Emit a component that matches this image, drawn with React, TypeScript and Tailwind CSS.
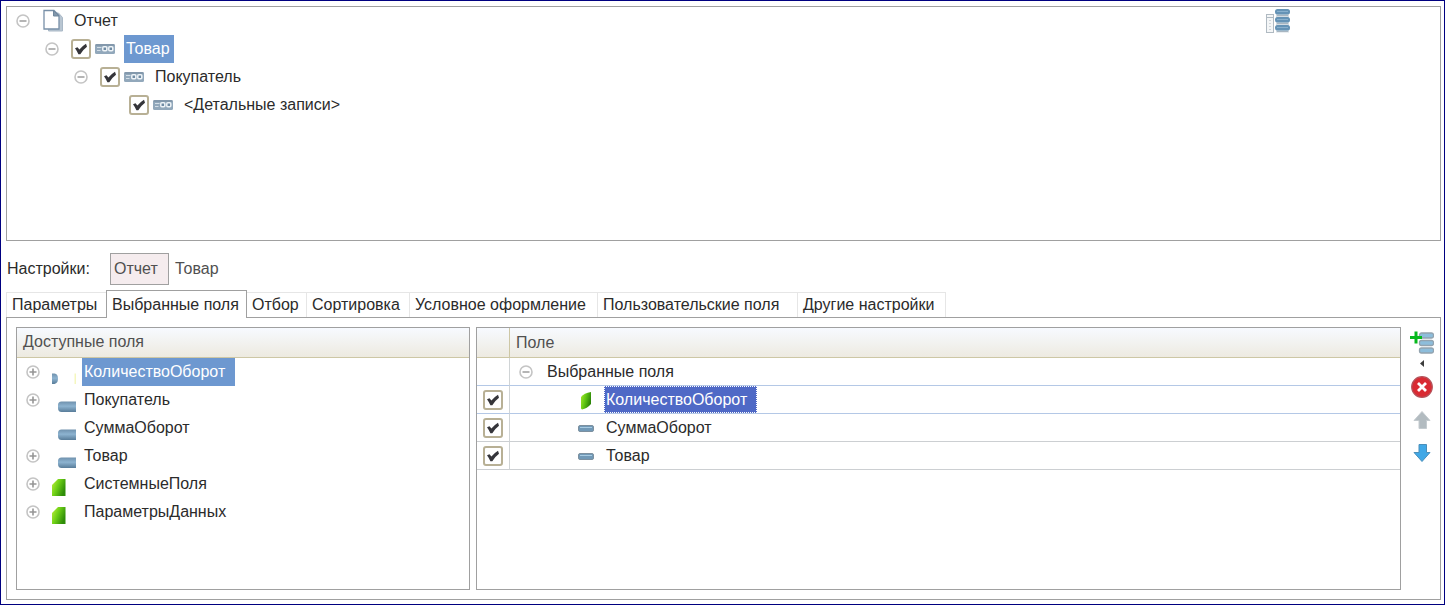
import { useState } from "react";
import type { ReactNode } from "react";

function Toggle({ open, label }: { open: boolean; label: string }) {
  return (
    <button type="button" aria-label={label} aria-expanded={open} className="h-3.5 w-3.5 shrink-0">
      <svg viewBox="0 0 14 14" className="block h-3.5 w-3.5" fill="none">
        <circle cx="7" cy="7" r="6" stroke="#c4c4c4" strokeWidth="1.6" />
        <path d={open ? "M3.5 7h7" : "M3.5 7h7M7 3.5v7"} stroke={open ? "#a3a3a3" : "#969696"} strokeWidth="1.6" />
      </svg>
    </button>
  );
}

function Tick({ label }: { label: string }) {
  const [on, setOn] = useState(true);
  return (
    <label className="grid h-5 w-5 shrink-0">
      <input
        type="checkbox"
        aria-label={label}
        checked={on}
        onChange={() => setOn(!on)}
        className="col-start-1 row-start-1 h-5 w-5 appearance-none rounded-[3px] border-2 border-[#b8b095] bg-white"
      />
      {on && (
        <svg viewBox="0 0 20 20" className="pointer-events-none col-start-1 row-start-1 h-5 w-5">
          <path d="M4 9.200 6.500 8.300 8.400 10.600Q11 7.200 15 4.800L16 7.800Q12 10.800 9.300 15.200L7.400 15.200Q6 12 4 9.200Z" fill="#35353a" />
        </svg>
      )}
    </label>
  );
}

function DocsIcon() {
  return (
    <svg viewBox="0 0 20 24" className="h-6 w-5 shrink-0">
      <path d="M5.500 4h10l4 4.500v13.500h-14z" fill="#b9c6d2" stroke="#a9b8c6" />
      <path d="M1 1.500h10l5 5v13.500H1z" fill="#fff" stroke="#7890a8" strokeWidth="1.300" />
      <path d="M10.500 1.500v5.500H16z" fill="#8297ab" stroke="#6f879d" />
    </svg>
  );
}

function GroupIcon() {
  return (
    <svg viewBox="0 0 20 10" className="h-2.5 w-5 shrink-0">
      <rect x="0" y="0" width="20" height="10" rx="1.500" fill="#92a8bb" />
      <path d="M0.500 1h19" stroke="#74899d" />
      <path d="M2 3.500h4.500M2 6.500h3.500" stroke="#d3dee7" />
      <rect x="7.800" y="2.800" width="4" height="4" rx="1" fill="#6f8ba3" stroke="#eef3f7" strokeWidth="1.500" />
      <rect x="13.800" y="2.800" width="4" height="4" rx="1" fill="#6f8ba3" stroke="#eef3f7" strokeWidth="1.500" />
    </svg>
  );
}

function ColumnsIcon() {
  return (
    <svg viewBox="0 0 24 24" className="block h-6 w-6">
      <rect x="0.500" y="5.500" width="7" height="18" fill="#f4f6f7" stroke="#b0bac2" />
      <path d="M1 8.500h6" stroke="#b0bac2" />
      <path d="M4 11v11" stroke="#aab4bd" strokeDasharray="1 2" />
      <path d="M10 4h13v19.500H10z" fill="#d3dce3" />
      <path d="M11 6.500h11M11 14.500h11M11 22.500h11" stroke="#a9b6c1" />
      <rect x="9" y="0" width="15" height="5.500" rx="2.500" fill="#6593b6" />
      <rect x="9" y="8" width="15" height="5.500" rx="2.500" fill="#6593b6" />
      <rect x="9" y="16" width="15" height="5.500" rx="2.500" fill="#6593b6" />
      <path d="M11 2.500h11M11 10.500h11M11 18.500h11" stroke="#88b0ce" />
    </svg>
  );
}

type FieldKind = "cut" | "field" | "cube";

function FieldIcon({ kind }: { kind: FieldKind }) {
  return (
    <svg viewBox="0 0 24 24" className="h-6 w-6 shrink-0">
      <defs>
        <linearGradient id="bar" x1="0" y1="0" x2="0" y2="1">
          <stop offset="0" stopColor="#6f91ad" />
          <stop offset="0.450" stopColor="#8db3d0" />
          <stop offset="1" stopColor="#587c99" />
        </linearGradient>
        <linearGradient id="leaf" x1="0" y1="0" x2="1" y2="0.500">
          <stop offset="0" stopColor="#c0f03c" />
          <stop offset="0.500" stopColor="#6dcf16" />
          <stop offset="1" stopColor="#2f8d08" />
        </linearGradient>
      </defs>
      {kind === "cut" && (
        <>
          <path d="M0 13.500h2.500Q6 14 6 18.500T2.500 24H0z" fill="url(#bar)" />
          <path d="M22.500 13.500H24V24h-1.500z" fill="#f5f7bf" />
        </>
      )}
      {kind === "field" && <path d="M24 13.500H9.500Q6 13.500 6 17v3q0 4 3.500 4H24z" fill="url(#bar)" />}
      {kind === "cube" && <path d="M6 7h7.500v17H0V13z" fill="url(#leaf)" />}
    </svg>
  );
}

function BarIcon() {
  return (
    <svg viewBox="0 0 16 8" className="h-2 w-4">
      <rect x="0.500" y="1.500" width="15" height="6" rx="1.500" fill="#7199b7" stroke="#7d909f" />
      <path d="M2 3.500h12" stroke="#a8cbe2" />
    </svg>
  );
}

function LeafIcon() {
  return (
    <svg viewBox="0 0 16 20" className="h-5 w-4">
      <defs>
        <linearGradient id="gem" x1="0" y1="0" x2="1" y2="0.400">
          <stop offset="0" stopColor="#a9ea2c" />
          <stop offset="0.500" stopColor="#62c814" />
          <stop offset="1" stopColor="#2c8608" />
        </linearGradient>
      </defs>
      <path d="M3 7Q6 3 13 2v12Q9 18.500 4 19.500L3 18.500z" fill="url(#gem)" />
    </svg>
  );
}

type TreeRow = { level: number; text: string; group: boolean; leaf?: boolean; selected?: boolean };

const structure: TreeRow[] = [
  { level: 0, text: "Отчет", group: false },
  { level: 1, text: "Товар", group: true, selected: true },
  { level: 2, text: "Покупатель", group: true },
  { level: 3, text: "<Детальные записи>", group: true, leaf: true },
];

const indents = ["pl-[9px]", "pl-[38px]", "pl-[67px]", "pl-[96px]"];

const available: { text: string; kind: FieldKind; expandable: boolean; selected?: boolean }[] = [
  { text: "КоличествоОборот", kind: "cut", expandable: true, selected: true },
  { text: "Покупатель", kind: "field", expandable: true },
  { text: "СуммаОборот", kind: "field", expandable: false },
  { text: "Товар", kind: "field", expandable: true },
  { text: "СистемныеПоля", kind: "cube", expandable: true },
  { text: "ПараметрыДанных", kind: "cube", expandable: true },
];

const chosen = ["КоличествоОборот", "СуммаОборот", "Товар"];

const tabs = [
  { name: "Параметры", width: "min-w-[100px]" },
  { name: "Выбранные поля", width: "min-w-[141px]" },
  { name: "Отбор", width: "min-w-[60px]" },
  { name: "Сортировка", width: "min-w-[103px]" },
  { name: "Условное оформление", width: "min-w-[188px]" },
  { name: "Пользовательские поля", width: "min-w-[200px]" },
  { name: "Другие настройки", width: "min-w-[148px]" },
];

function Tool({ label, children }: { label: string; children: ReactNode }) {
  return (
    <button type="button" aria-label={label} className="flex h-6 w-6 items-center justify-center">
      {children}
    </button>
  );
}

export default function App() {
  const [tab, setTab] = useState(1);
  return (
    <main className="flex min-h-screen flex-col border border-[#000080] bg-white pt-[5px] pr-[3px] pb-1 pl-[5px] font-['Liberation_Sans',Arial,sans-serif] text-base leading-7 text-[#2b2b2b]">
      <section className="flex min-h-[235px] justify-between border border-[#a0a0a0]">
        <ul>
          {structure.map((row) => (
            <li key={row.text} className={`flex h-7 items-center ${indents[row.level]}`}>
              {row.leaf ? <span className="w-3.5" /> : <Toggle open label={row.text} />}
              {row.group ? (
                <span className="ml-3 flex items-center gap-1">
                  <Tick label={row.text} />
                  <GroupIcon />
                </span>
              ) : (
                <span className="ml-[13px] flex">
                  <DocsIcon />
                </span>
              )}
              <span className={`ml-[9px] min-w-[50px] px-0.5 ${row.selected ? "bg-[#6d98d0] text-white" : ""}`}>
                {row.text}
              </span>
            </li>
          ))}
        </ul>
        <button type="button" aria-label="Колонки" className="mt-0.5 mr-[150px] h-6 w-6">
          <ColumnsIcon />
        </button>
      </section>

      <div className="mt-3 flex h-8 items-center text-[#505050]">
        <span className="w-[104px] pl-px text-[#2b2b2b]">Настройки:</span>
        <button type="button" className="h-8 min-w-[59px] border border-[#a0a0a0] bg-[#f5ecee] px-[3px] text-left">
          Отчет
        </button>
        <button type="button" className="h-8 px-1.5">
          Товар
        </button>
      </div>

      <div role="tablist" className="mt-1.5 flex h-[26px] items-end">
        {tabs.map(({ name, width }, i) => (
          <button
            key={name}
            type="button"
            role="tab"
            aria-selected={i === tab}
            onClick={() => setTab(i)}
            className={`text-left ${width} ${
              i === tab
                ? "z-10 -mb-px h-7 border border-b-0 border-[#a0a0a0] bg-white px-[5px] leading-7"
                : "h-[25px] border-t border-r border-[#e6e6e6] px-[5px] leading-6 first:border-r-0 first:border-l"
            }`}
          >
            {name}
          </button>
        ))}
      </div>

      <section className="flex flex-1 border border-[#a0a0a0] py-[9px] pl-[9px]">
        <div className="w-[454px] shrink-0 border border-[#a0a0a0]">
          <h2 className="h-[30px] border-b border-[#cdc7a5] bg-linear-to-b from-[#f7faff] to-[#edeae0] px-1.5 text-[#505050]">
            Доступные поля
          </h2>
          <ul>
            {available.map((field) => (
              <li key={field.text} className="flex h-7 items-center pl-[9px]">
                {field.expandable ? <Toggle open={false} label={field.text} /> : <span className="w-3.5" />}
                <span className="ml-3 flex">
                  <FieldIcon kind={field.kind} />
                </span>
                <span className={`ml-1.5 px-0.5 ${field.selected ? "min-w-[153px] bg-[#6d98d0] text-white" : ""}`}>
                  {field.text}
                </span>
              </li>
            ))}
          </ul>
        </div>

        <div className="ml-1.5 flex-1 border border-[#a0a0a0]">
          <table className="w-full table-fixed border-separate border-spacing-0">
            <colgroup>
              <col className="w-[33px]" />
              <col />
            </colgroup>
            <thead>
              <tr className="h-[30px] bg-linear-to-b from-[#f7faff] to-[#edeae0] text-left text-[#505050]">
                <th aria-label="Пометка" className="border-r border-b border-[#cdc7a5] p-0" />
                <th className="border-b border-[#cdc7a5] px-1.5 py-0 font-normal">Поле</th>
              </tr>
            </thead>
            <tbody>
              <tr className="h-7 leading-[27px]">
                <td className="border-r border-b border-r-[#d0d4d6] border-b-[#b4c8e6] p-0" />
                <td className="border-b border-[#b4c8e6] p-0">
                  <div className="flex items-center pl-[9px]">
                    <Toggle open label="Выбранные поля" />
                    <span className="ml-3.5">Выбранные поля</span>
                  </div>
                </td>
              </tr>
              {chosen.map((name, i) => (
                <tr key={name} className="h-7 leading-[27px]">
                  <td
                    className={`border-r border-b border-r-[#d0d4d6] px-1.5 py-0 ${i === 0 ? "border-b-[#b4c8e6]" : "border-b-[#cccfd2]"}`}
                  >
                    <Tick label={name} />
                  </td>
                  <td className={`border-b p-0 ${i === 0 ? "border-[#b4c8e6]" : "border-[#cccfd2]"}`}>
                    <div className="flex items-center pl-[68px]">
                      {i === 0 ? <LeafIcon /> : <BarIcon />}
                      <span
                        className={
                          i === 0
                            ? "ml-2.5 min-w-[153px] border border-dotted border-white bg-[#4f69c6] px-px leading-[25px] text-white"
                            : "ml-2.5 px-0.5"
                        }
                      >
                        {name}
                      </span>
                    </div>
                  </td>
                </tr>
              ))}
            </tbody>
          </table>
        </div>

        <div className="flex w-[39px] flex-col items-center pt-1 pl-0.5">
          <Tool label="Добавить">
            <svg viewBox="0 0 24 24" className="h-6 w-6">
              <rect x="9.500" y="2" width="14" height="5" rx="2" fill="#8dbddb" stroke="#93a3af" strokeWidth="1.300" />
              <rect x="9.500" y="9.500" width="14" height="5" rx="2" fill="#8dbddb" stroke="#93a3af" strokeWidth="1.300" />
              <rect x="9.500" y="17" width="14" height="5" rx="2" fill="#8dbddb" stroke="#93a3af" strokeWidth="1.300" />
              <path d="M6 0.500v12M0 6.500h12" stroke="#06b81c" strokeWidth="3" />
            </svg>
          </Tool>
          <svg viewBox="0 0 4 7" className="mt-[5px] h-[7px] w-1">
            <path d="M4 0v7L0 3.500z" fill="#3c3c3c" />
          </svg>
          <div className="mt-2 flex flex-col gap-[9px]">
            <Tool label="Удалить">
              <svg viewBox="0 0 22 22" className="h-[22px] w-[22px]">
                <circle cx="11" cy="11" r="10.300" fill="#d92b33" stroke="#b5525a" strokeWidth="1.200" />
                <path d="m7 7 8 8M15 7l-8 8" stroke="#fff" strokeWidth="2.800" />
              </svg>
            </Tool>
            <Tool label="Вверх">
              <svg viewBox="0 0 18 18" className="h-[18px] w-[18px]">
                <path d="M9 0.500 17 9.500h-3.500V17.500h-7.500V9.500H1z" fill="#b2bbc0" stroke="#c4cbcf" />
              </svg>
            </Tool>
            <Tool label="Вниз">
              <svg viewBox="0 0 18 18" className="h-[18px] w-[18px]">
                <path d="M9 17.500 17 8.500h-3.500V0.500h-7.500V8.500H1z" fill="#41a8e6" stroke="#4a8fba" />
              </svg>
            </Tool>
          </div>
        </div>
      </section>
    </main>
  );
}
